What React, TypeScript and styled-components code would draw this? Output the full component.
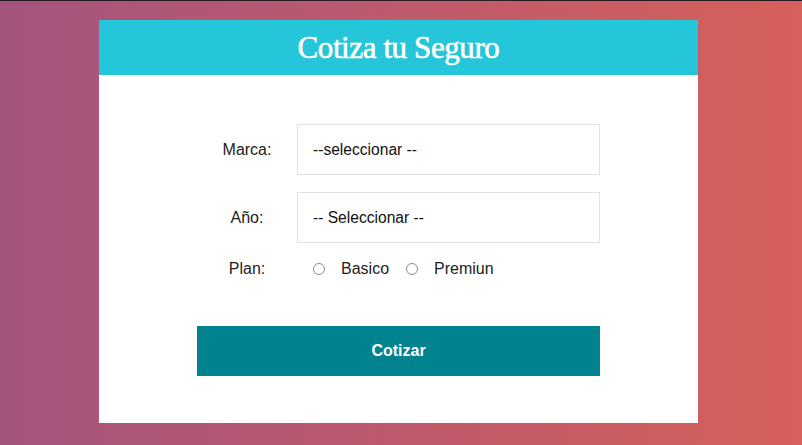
import styled, { createGlobalStyle } from 'styled-components';

const GlobalStyle = createGlobalStyle`
  html, body {
    margin: 0;
    padding: 0;
  }
  body {
    font-family: 'Liberation Sans', Arial, sans-serif;
    background: linear-gradient(to right, #a5547f 0%, #d6605a 100%);
    min-height: 445px;
    border-top: 1px solid #2a1a22;
    box-sizing: border-box;
  }
`;

const Page = styled.div`
  display: flex;
  justify-content: flex-start;
  padding: 19px 0 0 99px;
`;

const Card = styled.div`
  width: 599px;
  background-color: #fff;
`;

const Header = styled.header`
  height: 55px;
  background-color: #26c6da;
  display: flex;
  align-items: center;
  justify-content: center;
`;

const Title = styled.h1`
  margin: 0;
  font-family: 'Liberation Serif', 'Times New Roman', serif;
  font-weight: 400;
  font-size: 31px;
  letter-spacing: -0.4px;
  color: #fff;
  -webkit-text-stroke: 0.6px #fff;
`;

const Form = styled.form`
  display: flex;
  flex-direction: column;
  padding: 49px 98px 47px 98px;
`;

const Field = styled.div<{ $gap: number }>`
  display: flex;
  align-items: center;
  margin-bottom: ${(p) => p.$gap}px;
`;

const Label = styled.label`
  flex: 0 0 100px;
  text-align: center;
  font-size: 16px;
  color: #222;
`;

const Select = styled.select`
  flex: 1;
  height: 51px;
  padding: 0 15px;
  border: 1px solid #e1e1e1;
  background: #fff;
  font-family: 'Liberation Sans', Arial, sans-serif;
  font-size: 15.6px;
  color: #111;
  appearance: none;
  -webkit-appearance: none;
  border-radius: 0;
  outline: none;
`;

const RadioGroup = styled.div`
  display: flex;
  align-items: center;
  padding-left: 16px;
  font-size: 16px;
  color: #222;
`;

const Radio = styled.input`
  appearance: none;
  -webkit-appearance: none;
  width: 12px;
  height: 12px;
  margin: 0 16px 0 0;
  border: 1px solid #8a8a8a;
  border-radius: 50%;
  background: #fff;
`;

const RadioText = styled.span`
  margin-right: 17px;
`;

const Button = styled.button`
  height: 50px;
  border: none;
  background-color: #00838f;
  color: #fff;
  font-family: 'Liberation Sans', Arial, sans-serif;
  font-size: 16px;
  font-weight: 700;
  cursor: pointer;
`;

export default function App() {
  return (
    <>
      <GlobalStyle />
      <Page>
        <Card>
          <Header>
            <Title>Cotiza tu Seguro</Title>
          </Header>
          <Form onSubmit={(e) => e.preventDefault()}>
            <Field $gap={17}>
              <Label>Marca:</Label>
              <Select defaultValue="">
                <option value="">--seleccionar --</option>
              </Select>
            </Field>
            <Field $gap={17}>
              <Label>Año:</Label>
              <Select defaultValue="">
                <option value="">-- Seleccionar --</option>
              </Select>
            </Field>
            <Field $gap={48}>
              <Label>Plan:</Label>
              <RadioGroup>
                <Radio type="radio" name="plan" value="basico" />
                <RadioText>Basico</RadioText>
                <Radio type="radio" name="plan" value="premiun" />
                <RadioText>Premiun</RadioText>
              </RadioGroup>
            </Field>
            <Button type="submit">Cotizar</Button>
          </Form>
        </Card>
      </Page>
    </>
  );
}
